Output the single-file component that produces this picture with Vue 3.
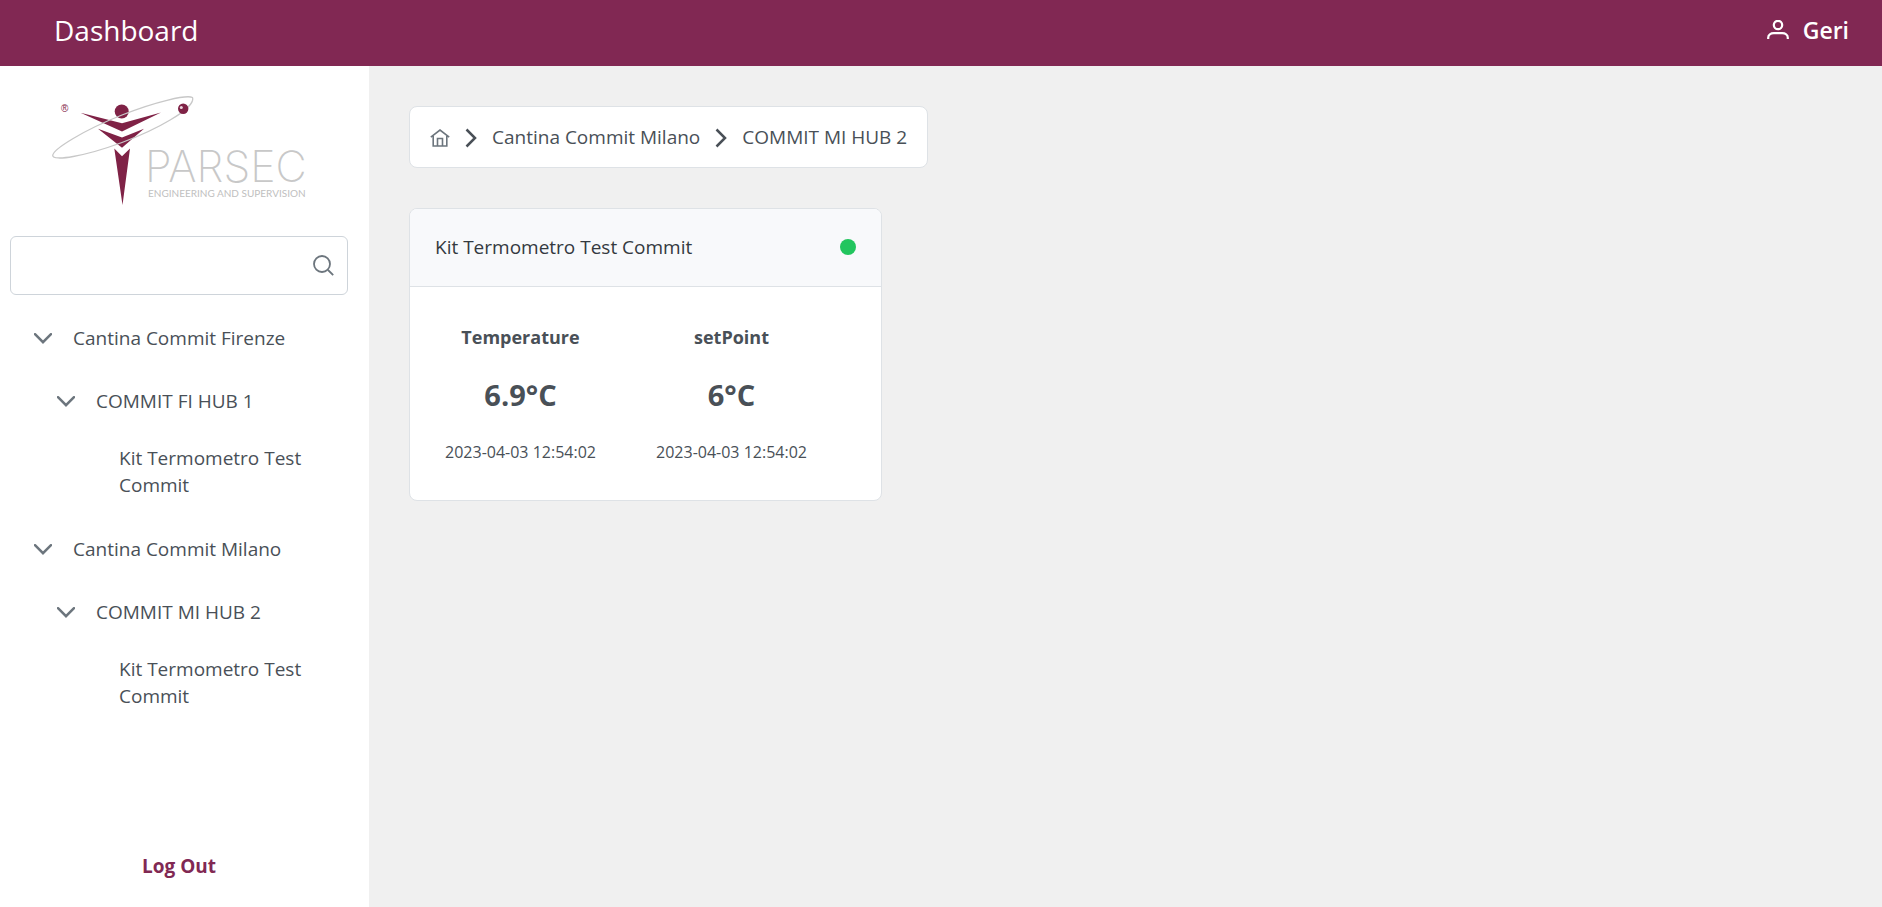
<script setup>
import { ref } from 'vue'

const search = ref('')

const sites = [
  { name: 'Cantina Commit Firenze', hub: 'COMMIT FI HUB 1', kit: 'Kit Termometro Test Commit' },
  { name: 'Cantina Commit Milano', hub: 'COMMIT MI HUB 2', kit: 'Kit Termometro Test Commit' },
]

const trail = ['Cantina Commit Milano', 'COMMIT MI HUB 2']

const metrics = [
  { label: 'Temperature', value: '6.9°C', time: '2023-04-03 12:54:02' },
  { label: 'setPoint', value: '6°C', time: '2023-04-03 12:54:02' },
]
</script>

<template>
  <div class="app">
    <header class="topbar">
      <h1 class="title">Dashboard</h1>
      <button class="user" type="button">
        <svg width="22" height="20" viewBox="0 0 22 20" aria-hidden="true">
          <circle cx="11" cy="5" r="4.2" />
          <path d="M1.2 19v-1.2c0-3 2.6-4.6 5.600-4.600h8.400c3 0 5.600 1.600 5.600 4.600V19" />
        </svg>
        <span>Geri</span>
      </button>
    </header>

    <div class="body">
      <aside class="sidebar">
        <svg class="logo" width="264" height="112" viewBox="52 95 264 112" role="img" aria-label="Parsec Engineering and Supervision">
          <g fill="#7f2246">
            <circle cx="121.700" cy="111.500" r="7" />
            <path d="M80.500 112.700L122 123.300L161 112.600L122 131.500Z" />
            <path d="M98 128.800L122 137.500L144 128.800L122 147.800Z" />
            <path d="M114.300 148.500L122 156.300L130 148.500L122.500 205Z" />
          </g>
          <path
            d="M192.500 97.500C187 94.500 156 101.500 122 115C84 130 53 149 52.700 155.500C53 161.500 84 156.500 122 142.500C160 128.500 190 110 192.500 100.500C192.800 99 192.800 98 192.500 97.500Z"
            fill="none"
            stroke="#c8c8c8"
            stroke-width="1.3"
          />
          <circle cx="183.200" cy="108.800" r="5.200" fill="#7f2246" />
          <circle cx="181.300" cy="107.500" r="1.500" fill="#ead7df" />
          <text class="reg" x="61" y="112">®</text>
          <text class="brand" x="145" y="182">PARSEC</text>
          <text class="tagline" x="148" y="197">ENGINEERING AND SUPERVISION</text>
        </svg>

        <label class="search">
          <input v-model="search" type="text" aria-label="Search" />
          <svg width="21" height="21" viewBox="0 0 21 21" aria-hidden="true">
            <circle cx="9" cy="9" r="8" />
            <path d="M15 15l5.200 5.200" />
          </svg>
        </label>

        <nav class="tree">
          <ul>
            <li v-for="site in sites" :key="site.name">
              <button class="node" type="button">
                <svg class="down" width="18" height="11" viewBox="0 0 18 11" aria-hidden="true"><path d="M1 1.200l8 8 8-8" /></svg>
                <span>{{ site.name }}</span>
              </button>
              <ul class="branch">
                <li>
                  <button class="node" type="button">
                    <svg class="down" width="18" height="11" viewBox="0 0 18 11" aria-hidden="true"><path d="M1 1.200l8 8 8-8" /></svg>
                    <span>{{ site.hub }}</span>
                  </button>
                  <a class="leaf" href="#">{{ site.kit }}</a>
                </li>
              </ul>
            </li>
          </ul>
        </nav>

        <button class="logout" type="button">Log Out</button>
      </aside>

      <main class="content">
        <nav class="crumbs" aria-label="Breadcrumb">
          <a class="home" href="#" aria-label="Home">
            <svg width="20" height="18" viewBox="0 0 20 18" aria-hidden="true">
              <path d="M.8 8.200L10 1l9.200 7.200M3.200 7v10h13.600V7M7.500 17V9.500h5V17" />
            </svg>
          </a>
          <template v-for="name in trail" :key="name">
            <svg class="next" width="12" height="20" viewBox="0 0 12 20" aria-hidden="true"><path d="M1.500 1.500L10 10l-8.500 8.500" /></svg>
            <a href="#">{{ name }}</a>
          </template>
        </nav>

        <section class="card">
          <header class="card-head">
            <h2>Kit Termometro Test Commit</h2>
            <span class="status" role="img" aria-label="Online"></span>
          </header>
          <div class="metrics">
            <div v-for="m in metrics" :key="m.label" class="metric">
              <span class="label">{{ m.label }}</span>
              <span class="value">{{ m.value }}</span>
              <time class="time">{{ m.time }}</time>
            </div>
          </div>
        </section>
      </main>
    </div>
  </div>
</template>

<style>
body {
  margin: 0;
  background: #f0f0f0;
}
</style>

<style scoped>
.app {
  display: flex;
  flex-direction: column;
  min-height: 100vh;
  font-family: 'Segoe UI', 'Open Sans', 'Noto Sans', sans-serif;
  font-size: 19px;
  line-height: 27px;
  color: #495057;
}

button {
  padding: 0;
  border: 0;
  background: none;
  font: inherit;
  color: inherit;
  cursor: pointer;
}

a {
  color: inherit;
  text-decoration: none;
}

ul {
  margin: 0;
  padding: 0;
  list-style: none;
}

svg {
  flex: none;
}

.topbar {
  display: flex;
  justify-content: space-between;
  align-items: center;
  box-sizing: border-box;
  height: 66px;
  padding: 0 33px 6px 54px;
  background: #812853;
  color: #fff;
}

.title {
  margin: 0;
  font-size: 28px;
  font-weight: 400;
  line-height: 40px;
}

.user {
  display: flex;
  align-items: center;
  gap: 14px;
  font-size: 23px;
  font-weight: 600;
  line-height: 32px;
}

.user svg {
  fill: none;
  stroke: #fff;
  stroke-width: 2.2;
}

.body {
  display: flex;
  flex: 1;
}

.sidebar {
  display: flex;
  flex: 0 0 369px;
  flex-direction: column;
  box-sizing: border-box;
  padding: 29px 21px 27px 10px;
  background: #fff;
}

.logo {
  margin-left: 42px;
}

.reg {
  font: 10px 'Liberation Sans', sans-serif;
  fill: #7f2246;
}

.brand {
  font: 200 43px Inter, sans-serif;
  fill: #c8c8c8;
}

.tagline {
  font: 10px Lato, sans-serif;
  fill: #c0c0c0;
}

.search {
  display: flex;
  align-items: center;
  box-sizing: border-box;
  height: 59px;
  margin-top: 29px;
  padding: 0 13px;
  border: 1px solid #ced4da;
  border-radius: 6px;
}

.search input {
  flex: 1;
  min-width: 0;
  border: 0;
  outline: 0;
  background: none;
  font: inherit;
  color: inherit;
}

.search svg {
  fill: none;
  stroke: #6c757d;
  stroke-width: 1.8;
}

.tree {
  margin-top: 12px;
}

.node {
  display: flex;
  align-items: center;
  gap: 21px;
  width: 100%;
  height: 63px;
  padding-left: 24px;
  text-align: left;
}

.down {
  fill: none;
  stroke: #6c757d;
  stroke-width: 2.5;
  stroke-linecap: round;
}

.branch {
  padding-left: 23px;
}

.leaf {
  display: block;
  padding: 12px 24px 19px 86px;
}

.logout {
  align-self: center;
  margin-top: auto;
  font-weight: 700;
  color: #812853;
}

.content {
  flex: 1;
  min-width: 0;
  padding: 40px;
}

.crumbs {
  display: flex;
  align-items: center;
  width: fit-content;
  gap: 15px;
  padding: 17px 20px 16px;
  border: 1px solid #dee2e6;
  border-radius: 8px;
  background: #fff;
}

.home {
  display: flex;
}

.home svg {
  fill: none;
  stroke: #6c757d;
  stroke-width: 1.6;
}

.next {
  fill: none;
  stroke: #495057;
  stroke-width: 2.5;
}

.card {
  width: 471px;
  max-width: 100%;
  margin-top: 40px;
  overflow: hidden;
  border: 1px solid #dee2e6;
  border-radius: 8px;
  background: #fff;
}

.card-head {
  display: flex;
  justify-content: space-between;
  padding: 25px;
  border-bottom: 1px solid #dee2e6;
  background: #f8f9fb;
}

.card-head h2 {
  margin: 0;
  font-size: 19px;
  font-weight: 400;
  color: #343a40;
}

.status {
  width: 16px;
  height: 16px;
  margin-top: 5px;
  border-radius: 50%;
  background: #22c55e;
}

.metrics {
  display: flex;
  padding: 37px 5px 34px;
}

.metric {
  display: flex;
  flex: 0 1 211px;
  flex-direction: column;
  align-items: center;
  gap: 25px;
}

.label {
  font-size: 18px;
  font-weight: 700;
}

.value {
  font-size: 29px;
  font-weight: 700;
  line-height: 38px;
}

.time {
  font-size: 16px;
}
</style>
